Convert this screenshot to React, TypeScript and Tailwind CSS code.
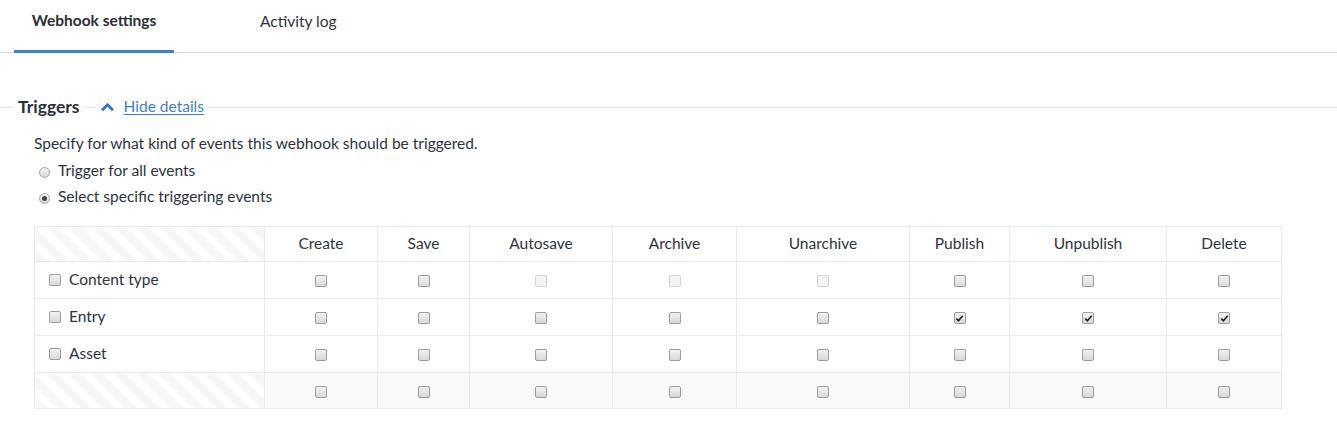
import { ReactNode } from "react";

type Cell = "off" | "on" | "disabled";

const columns = [
  { label: "Create", w: "w-[113px]" },
  { label: "Save", w: "w-[92px]" },
  { label: "Autosave", w: "w-[143px]" },
  { label: "Archive", w: "w-[124px]" },
  { label: "Unarchive", w: "w-[173px]" },
  { label: "Publish", w: "w-[100px]" },
  { label: "Unpublish", w: "w-[157px]" },
  { label: "Delete", w: "w-[115px]" },
];

const rows: { label: string; cells: Cell[] }[] = [
  { label: "Content type", cells: ["off", "off", "disabled", "disabled", "disabled", "off", "off", "off"] },
  { label: "Entry", cells: ["off", "off", "off", "off", "off", "on", "on", "on"] },
  { label: "Asset", cells: ["off", "off", "off", "off", "off", "off", "off", "off"] },
];

const stripes =
  "bg-[repeating-linear-gradient(45deg,#f4f6f8_0px,#f4f6f8_8px,#ffffff_8px,#ffffff_16px)]";

function Checkbox({ state = "off" }: { state?: Cell }) {
  if (state === "disabled") {
    return <span className="inline-block w-[12px] h-[12px] rounded-[2px] border border-[#d4d4d4] bg-[#f4f4f4] align-middle" />;
  }
  return (
    <span className="relative inline-flex items-center justify-center w-[12px] h-[12px] rounded-[2px] border border-[#9d9d9d] bg-gradient-to-b from-[#f2f2f2] to-[#d9d9d9] align-middle">
      {state === "on" && (
        <svg viewBox="0 0 10 10" className="w-[9px] h-[9px]">
          <path d="M1.5 5.2 L3.8 7.6 L8.6 2" fill="none" stroke="#222" strokeWidth="1.8" />
        </svg>
      )}
    </span>
  );
}

function Radio({ checked, children }: { checked?: boolean; children: ReactNode }) {
  return (
    <label className="flex items-center gap-[8px] h-[26px]">
      <span className="ml-[5px] inline-flex items-center justify-center w-[11px] h-[11px] rounded-full border border-[#a8a8a8] bg-gradient-to-b from-[#f4f4f4] to-[#d8d8d8] mt-[3px]">
        {checked && <span className="w-[5px] h-[5px] rounded-full bg-[#444]" />}
      </span>
      <span>{children}</span>
    </label>
  );
}

export default function App() {
  return (
    <div className="w-[1337px] h-[426px] bg-white text-[15.5px] text-[#2d3440] font-['Lato','Open_Sans',sans-serif]">
      <div className="flex border-b border-[#d3dce0] h-[53px]">
        <div className="ml-[14px] w-[160px] flex items-center justify-center pb-[8px] font-bold text-[#2a3039] border-b-[3px] border-[#3c80cf] mb-[-1px]">
          Webhook settings
        </div>
        <div className="ml-[86px] flex items-center pb-[8px] text-[#2d3440]">Activity log</div>
      </div>

      <div className="mt-[43px] flex items-center h-[22px]">
        <span className="w-[14px] h-px bg-[#e5e5e5]" />
        <span className="px-[4px] font-bold text-[17.5px] text-[#2a3039]">Triggers</span>
        <span className="w-[12px] h-px bg-[#e5e5e5]" />
        <svg viewBox="0 0 16 12" className="ml-[4px] w-[15px] h-[11px]">
          <path d="M2 9 L8 3 L14 9" fill="none" stroke="#2d78cf" strokeWidth="3" />
        </svg>
        <a className="ml-[9px] text-[#3c80cf] underline underline-offset-2 cursor-pointer">Hide details</a>
        <span className="ml-[3px] flex-1 h-px bg-[#e5e5e5]" />
      </div>

      <div className="pl-[34px] pt-[15px]">
        <p className="h-[20px] leading-[20px]">Specify for what kind of events this webhook should be triggered.</p>
        <div className="mt-[5px]">
          <Radio>Trigger for all events</Radio>
          <Radio checked>Select specific triggering events</Radio>
        </div>

        <table className="mt-[16px] border-collapse">
          <thead>
            <tr className="h-[35px]">
              <th className={`w-[230px] border border-[#e5ebed] ${stripes}`} />
              {columns.map((c) => (
                <th key={c.label} className={`${c.w} border border-[#e5ebed] font-normal text-[#2d3440] text-center`}>
                  {c.label}
                </th>
              ))}
            </tr>
          </thead>
          <tbody>
            {rows.map((r) => (
              <tr key={r.label} className="h-[37px]">
                <td className="border border-[#e5ebed] pl-[14px]">
                  <div className="flex items-center gap-[8px]">
                    <Checkbox />
                    <span>{r.label}</span>
                  </div>
                </td>
                {r.cells.map((s, i) => (
                  <td key={i} className="border border-[#e5ebed] text-center">
                    <Checkbox state={s} />
                  </td>
                ))}
              </tr>
            ))}
            <tr className="h-[36px] bg-[#f7f9fa]">
              <td className={`border border-[#e5ebed] ${stripes}`} />
              {columns.map((c) => (
                <td key={c.label} className="border border-[#e5ebed] text-center">
                  <Checkbox />
                </td>
              ))}
            </tr>
          </tbody>
        </table>
      </div>
    </div>
  );
}
